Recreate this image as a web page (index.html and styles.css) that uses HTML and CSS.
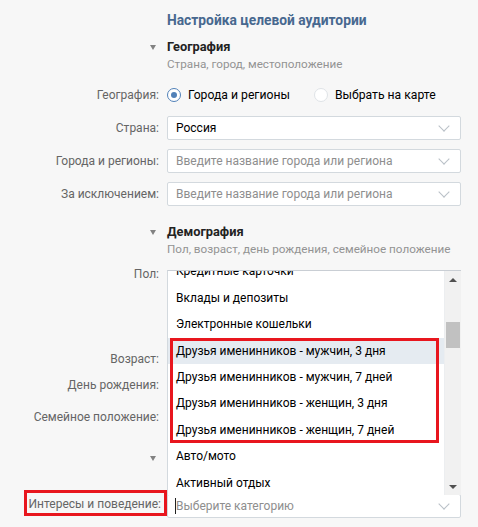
FILE: index.html
```html
<!DOCTYPE html>
<html lang="ru">
<head>
<meta charset="utf-8">
<title>Настройка целевой аудитории</title>
<link rel="stylesheet" href="styles.css">
</head>
<body>
<div class="page">
  <div class="row title-row">
    <div></div>
    <h1 class="title">Настройка целевой аудитории</h1>
  </div>

  <div class="row head-row">
    <div class="tri-cell"><span class="tri"></span></div>
    <div>
      <div class="group-title">География</div>
      <div class="group-sub">Страна, город, местоположение</div>
    </div>
  </div>

  <div class="row field-row radio-row">
    <div class="label">География:</div>
    <div class="radios">
      <span class="radio on"></span><span class="radio-text">Города и регионы</span>
      <span class="radio off"></span><span class="radio-text">Выбрать на карте</span>
    </div>
  </div>

  <div class="row field-row">
    <div class="label">Страна:</div>
    <div class="select"><span class="value">Россия</span><span class="chev"></span></div>
  </div>

  <div class="row field-row">
    <div class="label">Города и регионы:</div>
    <div class="select"><span class="ph">Введите название города или региона</span><span class="chev"></span></div>
  </div>

  <div class="row field-row">
    <div class="label">За исключением:</div>
    <div class="select"><span class="ph">Введите название города или региона</span><span class="chev"></span></div>
  </div>

  <div class="row head-row demo-head">
    <div class="tri-cell"><span class="tri"></span></div>
    <div>
      <div class="group-title">Демография</div>
      <div class="group-sub">Пол, возраст, день рождения, семейное положение</div>
    </div>
  </div>

  <div class="row field-row sex-row">
    <div class="label">Пол:</div>
    <div></div>
  </div>

  <div class="row field-row age-row">
    <div class="label">Возраст:</div>
    <div></div>
  </div>

  <div class="row field-row bday-row">
    <div class="label">День рождения:</div>
    <div></div>
  </div>

  <div class="row field-row family-row">
    <div class="label">Семейное положение:</div>
    <div></div>
  </div>

  <div class="row head-row interests-head">
    <div class="tri-cell"><span class="tri"></span></div>
    <div class="blank-head"></div>
  </div>

  <div class="row field-row interests-row">
    <div class="label"><span class="marked">Интересы и поведение:</span></div>
    <div class="select open">
      <span class="caret"></span><span class="ph">Выберите категорию</span><span class="chev"></span>
      <div class="menu">
        <div class="menu-list">
          <ul class="items">
            <li>Кредитные карточки</li>
            <li>Вклады и депозиты</li>
            <li>Электронные кошельки</li>
            <li class="hover">Друзья именинников - мужчин, 3 дня</li>
            <li>Друзья именинников - мужчин, 7 дней</li>
            <li>Друзья именинников - женщин, 3 дня</li>
            <li>Друзья именинников - женщин, 7 дней</li>
            <li>Авто/мото</li>
            <li>Активный отдых</li>
          </ul>
          <div class="mark-box"></div>
        </div>
        <div class="scrollbar">
          <span class="arr up"></span>
          <div class="track"><span class="thumb"></span></div>
          <span class="arr down"></span>
        </div>
      </div>
    </div>
  </div>
</div>
</body>
</html>
```

FILE: styles.css
```css
html, body {
  margin: 0;
  padding: 0;
}
body {
  background: #f7f7f7;
  font-family: Roboto, "Liberation Sans", Arial, sans-serif;
  font-size: 12px;
  color: #000;
}
.page {
  padding-top: 11px;
}
.row {
  display: grid;
  grid-template-columns: 159px 294px;
  column-gap: 8px;
}
.title {
  margin: 0;
  font-size: 13.8px;
  line-height: 18px;
  font-weight: 700;
  color: #47688f;
}
.head-row {
  margin-top: 9px;
}
.tri-cell {
  display: flex;
  justify-content: flex-end;
  padding-top: 7px;
  padding-right: 3px;
  height: 11px;
}
.tri {
  width: 0;
  height: 0;
  border-left: 3.5px solid transparent;
  border-right: 3.5px solid transparent;
  border-top: 5px solid #828282;
}
.group-title {
  font-size: 12.8px;
  line-height: 18px;
  font-weight: 700;
  color: #222;
}
.group-sub {
  font-size: 11.7px;
  line-height: 16px;
  color: #939393;
  white-space: nowrap;
}
.field-row {
  align-items: center;
  min-height: 24px;
  margin-top: 9px;
}
.radio-row {
  margin-top: 11px;
}
.label {
  text-align: right;
  color: #656565;
  font-size: 12px;
  line-height: 16px;
  white-space: nowrap;
}
.radios {
  display: flex;
  align-items: center;
  height: 24px;
}
.radio {
  box-sizing: border-box;
  width: 14px;
  height: 14px;
  border-radius: 50%;
  background: #fff;
  flex: none;
}
.radio.on {
  border: 1px solid #5181b8;
  position: relative;
}
.radio.on::after {
  content: "";
  position: absolute;
  left: 3px;
  top: 3px;
  width: 6px;
  height: 6px;
  border-radius: 50%;
  background: #5181b8;
}
.radio.off {
  border: 1px solid #dfe3e7;
  margin-left: 24px;
}
.radio-text {
  margin-left: 7px;
  line-height: 16px;
  font-size: 12.2px;
}
.select {
  box-sizing: border-box;
  height: 24px;
  background: #fff;
  border: 1px solid #d3d9de;
  border-radius: 2px;
  display: flex;
  align-items: center;
  padding-left: 8px;
  font-size: 12px;
  position: relative;
}
.value {
  color: #000;
  flex: 1;
}
.ph {
  color: #8e8e8e;
  flex: 1;
  white-space: nowrap;
}
.chev {
  width: 7px;
  height: 7px;
  border-right: 1px solid #b9c0c7;
  border-bottom: 1px solid #b9c0c7;
  transform: rotate(45deg);
  margin: -5px 12px 0 0;
  flex: none;
}
.demo-head {
  margin-top: 17px;
}
.sex-row {
  margin-top: 5px;
}
.age-row {
  margin-top: 61px;
}
.bday-row {
  margin-top: 2px;
}
.family-row {
  margin-top: 8px;
}
.interests-head {
  margin-top: 20px;
}
.blank-head {
  height: 34px;
}
.interests-row {
  margin-top: 11px;
}
.marked {
  display: inline-block;
  border: 3px solid #e8161e;
  padding: 3px 3px 1px 2px;
  margin-right: -8px;
  margin-top: -6px;
}
.caret {
  position: absolute;
  left: 7px;
  top: 3px;
  width: 1px;
  height: 16px;
  background: #222;
}
.menu {
  position: absolute;
  left: -1px;
  right: -1px;
  bottom: 100%;
  height: 225px;
  box-sizing: border-box;
  border-top: 1px solid #c9ced4;
  border-left: 1px solid #d3d9de;
  background: #fff;
  display: flex;
}
.menu-list {
  flex: 1;
  overflow: hidden;
  position: relative;
  border-right: 1px solid #eceef0;
}
.items {
  list-style: none;
  margin: -12.6px 0 0;
  padding: 0;
}
.items li {
  height: 26.4px;
  line-height: 26.4px;
  padding-left: 8px;
  white-space: nowrap;
  color: #000;
}
.items li.hover {
  background: #e5ebf1;
}
.mark-box {
  position: absolute;
  left: 2px;
  top: 67px;
  width: 269px;
  height: 105px;
  box-sizing: border-box;
  border: 3px solid #e8161e;
}
.scrollbar {
  width: 16px;
  background: #f1f1f1;
  display: flex;
  flex-direction: column;
  align-items: center;
}
.arr {
  width: 0;
  height: 0;
  border-left: 4px solid transparent;
  border-right: 4px solid transparent;
  flex: none;
}
.arr.up {
  border-bottom: 4px solid #505050;
  margin-top: 7px;
}
.arr.down {
  border-top: 4px solid #505050;
  margin-bottom: 6px;
}
.track {
  flex: 1;
  align-self: stretch;
  padding: 0 1px;
}
.thumb {
  display: block;
  margin-top: 40px;
  height: 26px;
  background: #c1c1c1;
}
```
